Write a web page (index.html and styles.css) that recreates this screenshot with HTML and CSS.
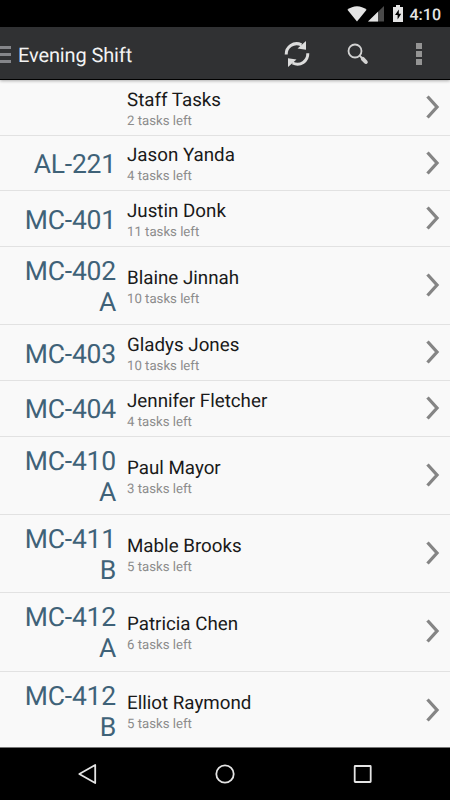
FILE: index.html
```html
<!DOCTYPE html>
<html lang="en">
  <head>
    <meta charset="UTF-8" />
    <meta name="viewport" content="width=device-width, initial-scale=1.0" />
    <title>Evening Shift</title>
    <link rel="stylesheet" href="styles.css">
  </head>
  <body>
    <div class="status-bar">
      <svg class="wifi" width="20" height="16" viewBox="0 0 20 16">
        <path d="M10 15.5L0.4 3.8C6-1 14-1 19.6 3.8z" />
      </svg>
      <svg class="signal" width="16" height="16" viewBox="0 0 16 16">
        <path class="dim" d="M16 0v15.5H0z" />
        <path d="M10 5.8v9.7H0z" />
      </svg>
      <svg class="battery" width="10" height="17" viewBox="0 0 10 17">
        <path d="M3 0h4v2h3v15H0V2h3z" />
        <path class="bolt" d="M5.8 4.5L2 10h2.6v4.5L8.2 8.8H5.8z" />
      </svg>
      <span class="clock">4:10</span>
    </div>

    <header>
      <div class="drawer"><i></i><i></i><i></i></div>
      <h1>Evening Shift</h1>
      <svg class="refresh" width="26" height="28" viewBox="0 0 26 28">
        <path class="arc" d="M2.2 14.5C2 7 9.5 1.2 17.5 4.8M23.8 13.3C24 21 16.5 26.6 8.5 23" />
        <path d="M22 1v8.7L13.5 8.5zM4 27V18.3L12.5 19.5z" />
      </svg>
      <svg class="search" width="22" height="22" viewBox="0 0 22 22">
        <circle cx="8" cy="8" r="6.5" />
        <path d="M12.5 12.5L15 15" />
        <path class="handle" d="M15.8 15.8L18.8 19" />
      </svg>
      <div class="overflow"><i></i><i></i><i></i></div>
    </header>

    <ul class="task-list">
      <li class="row">
        <div class="room"></div>
        <div class="info"><div class="name">Staff Tasks</div><div class="left">2 tasks left</div></div>
        <svg class="chevron" viewBox="0 0 14 24"><path d="M1.5 1.5L11 12L1.5 22.5" /></svg>
      </li>
      <li class="row">
        <div class="room">AL-221</div>
        <div class="info"><div class="name">Jason Yanda</div><div class="left">4 tasks left</div></div>
        <svg class="chevron" viewBox="0 0 14 24"><path d="M1.5 1.5L11 12L1.5 22.5" /></svg>
      </li>
      <li class="row">
        <div class="room">MC-401</div>
        <div class="info"><div class="name">Justin Donk</div><div class="left">11 tasks left</div></div>
        <svg class="chevron" viewBox="0 0 14 24"><path d="M1.5 1.5L11 12L1.5 22.5" /></svg>
      </li>
      <li class="row tall">
        <div class="room">MC-402<br>A</div>
        <div class="info"><div class="name">Blaine Jinnah</div><div class="left">10 tasks left</div></div>
        <svg class="chevron" viewBox="0 0 14 24"><path d="M1.5 1.5L11 12L1.5 22.5" /></svg>
      </li>
      <li class="row">
        <div class="room">MC-403</div>
        <div class="info"><div class="name">Gladys Jones</div><div class="left">10 tasks left</div></div>
        <svg class="chevron" viewBox="0 0 14 24"><path d="M1.5 1.5L11 12L1.5 22.5" /></svg>
      </li>
      <li class="row">
        <div class="room">MC-404</div>
        <div class="info"><div class="name">Jennifer Fletcher</div><div class="left">4 tasks left</div></div>
        <svg class="chevron" viewBox="0 0 14 24"><path d="M1.5 1.5L11 12L1.5 22.5" /></svg>
      </li>
      <li class="row tall">
        <div class="room">MC-410<br>A</div>
        <div class="info"><div class="name">Paul Mayor</div><div class="left">3 tasks left</div></div>
        <svg class="chevron" viewBox="0 0 14 24"><path d="M1.5 1.5L11 12L1.5 22.5" /></svg>
      </li>
      <li class="row tall">
        <div class="room">MC-411<br>B</div>
        <div class="info"><div class="name">Mable Brooks</div><div class="left">5 tasks left</div></div>
        <svg class="chevron" viewBox="0 0 14 24"><path d="M1.5 1.5L11 12L1.5 22.5" /></svg>
      </li>
      <li class="row tall">
        <div class="room">MC-412<br>A</div>
        <div class="info"><div class="name">Patricia Chen</div><div class="left">6 tasks left</div></div>
        <svg class="chevron" viewBox="0 0 14 24"><path d="M1.5 1.5L11 12L1.5 22.5" /></svg>
      </li>
      <li class="row tall">
        <div class="room">MC-412<br>B</div>
        <div class="info"><div class="name">Elliot Raymond</div><div class="left">5 tasks left</div></div>
        <svg class="chevron" viewBox="0 0 14 24"><path d="M1.5 1.5L11 12L1.5 22.5" /></svg>
      </li>
    </ul>

    <nav>
      <svg viewBox="0 0 22 22"><path d="M18.2 2v18L2.3 11z" /></svg>
      <svg viewBox="0 0 22 22"><circle cx="11" cy="11" r="8.7" /></svg>
      <svg viewBox="0 0 22 22"><rect x="2.7" y="3" width="16" height="16" rx="0.5" /></svg>
    </nav>
  </body>
</html>
```
FILE: styles.css
```css
:root {
  --bar: #303133;
  --bg: #f9f9f9;
  --room: #3f6278;
  --icon: #e4e4e4;
}

* {
  box-sizing: border-box;
}

body {
  margin: 0;
  height: 800px;
  display: flex;
  flex-direction: column;
  overflow: hidden;
  background: #000;
  font-family: Roboto, sans-serif;
  text-rendering: geometricPrecision;
}

.status-bar {
  height: 27px;
  flex: none;
  display: flex;
  align-items: flex-start;
  justify-content: flex-end;
  padding: 5px 9px 0 0;
  color: var(--icon);
}

.status-bar svg {
  fill: var(--icon);
}

.wifi {
  margin-top: 1px;
}

.signal {
  margin: 1px 9px 0 1px;
}

.status-bar .dim {
  fill: #4a4a4a;
}

.status-bar .bolt {
  fill: #000;
}

.clock {
  margin-left: 7px;
  font-size: 16px;
  font-weight: 500;
  line-height: 19px;
}

header {
  height: 53px;
  flex: none;
  display: flex;
  align-items: center;
  background: var(--bar);
  border-bottom: 1px solid #000;
  box-shadow: 0 1px 3px rgba(0, 0, 0, 0.3);
  position: relative;
}

.drawer {
  width: 11px;
  display: flex;
  flex-direction: column;
  gap: 4px;
  margin: 2px 7px 0 0;
}

.drawer i {
  height: 3px;
  background: #85868a;
}

h1 {
  flex: 1;
  margin: 3px 0 0;
  color: #f3f3f3;
  font-size: 20px;
  font-weight: 400;
  letter-spacing: -0.12px;
}

.refresh {
  fill: #dcdcdc;
  margin: 2px 37px 0 0;
}

.refresh .arc {
  fill: none;
  stroke: #dcdcdc;
  stroke-width: 3;
}

.search {
  fill: none;
  stroke: #d2d2d2;
  stroke-width: 1.8;
  margin: 2px 46px 0 0;
}

.search .handle {
  stroke-width: 4;
  stroke-linecap: round;
}

.overflow {
  width: 6px;
  display: flex;
  flex-direction: column;
  gap: 2px;
  margin: 2px 28px 0 1px;
}

.overflow i {
  height: 6px;
  background: #949494;
}

.task-list {
  height: 667px;
  flex: none;
  margin: 0;
  padding: 0;
  list-style: none;
  overflow: hidden;
  background: var(--bg);
}

.row {
  height: 55.7px;
  display: flex;
  align-items: center;
  border-bottom: 1px solid #e2e2e2;
  padding-right: 10px;
}

.row.tall {
  height: 78.3px;
}

.room {
  width: 116px;
  flex: none;
  padding-top: 3px;
  color: var(--room);
  font-size: 26.5px;
  letter-spacing: -0.2px;
  line-height: 31px;
  text-align: right;
}

.info {
  flex: 1;
  padding: 4.6px 0 0 11px;
}

.name {
  color: #1a1a1a;
  font-size: 18.75px;
  line-height: 21px;
}

.left {
  color: #8c8c8c;
  font-size: 13.2px;
  line-height: 16px;
  margin-top: 3px;
}

.chevron {
  width: 14px;
  height: 24px;
  margin-bottom: 1px;
  fill: none;
  stroke: #858585;
  stroke-width: 3.3;
}

nav {
  height: 53px;
  flex: none;
  display: flex;
  align-items: center;
  justify-content: center;
  gap: 115.5px;
  border-top: 1px solid #777;
}

nav svg {
  width: 22px;
  height: 22px;
  fill: none;
  stroke: var(--icon);
  stroke-width: 1.8;
  stroke-linejoin: round;
}
```
